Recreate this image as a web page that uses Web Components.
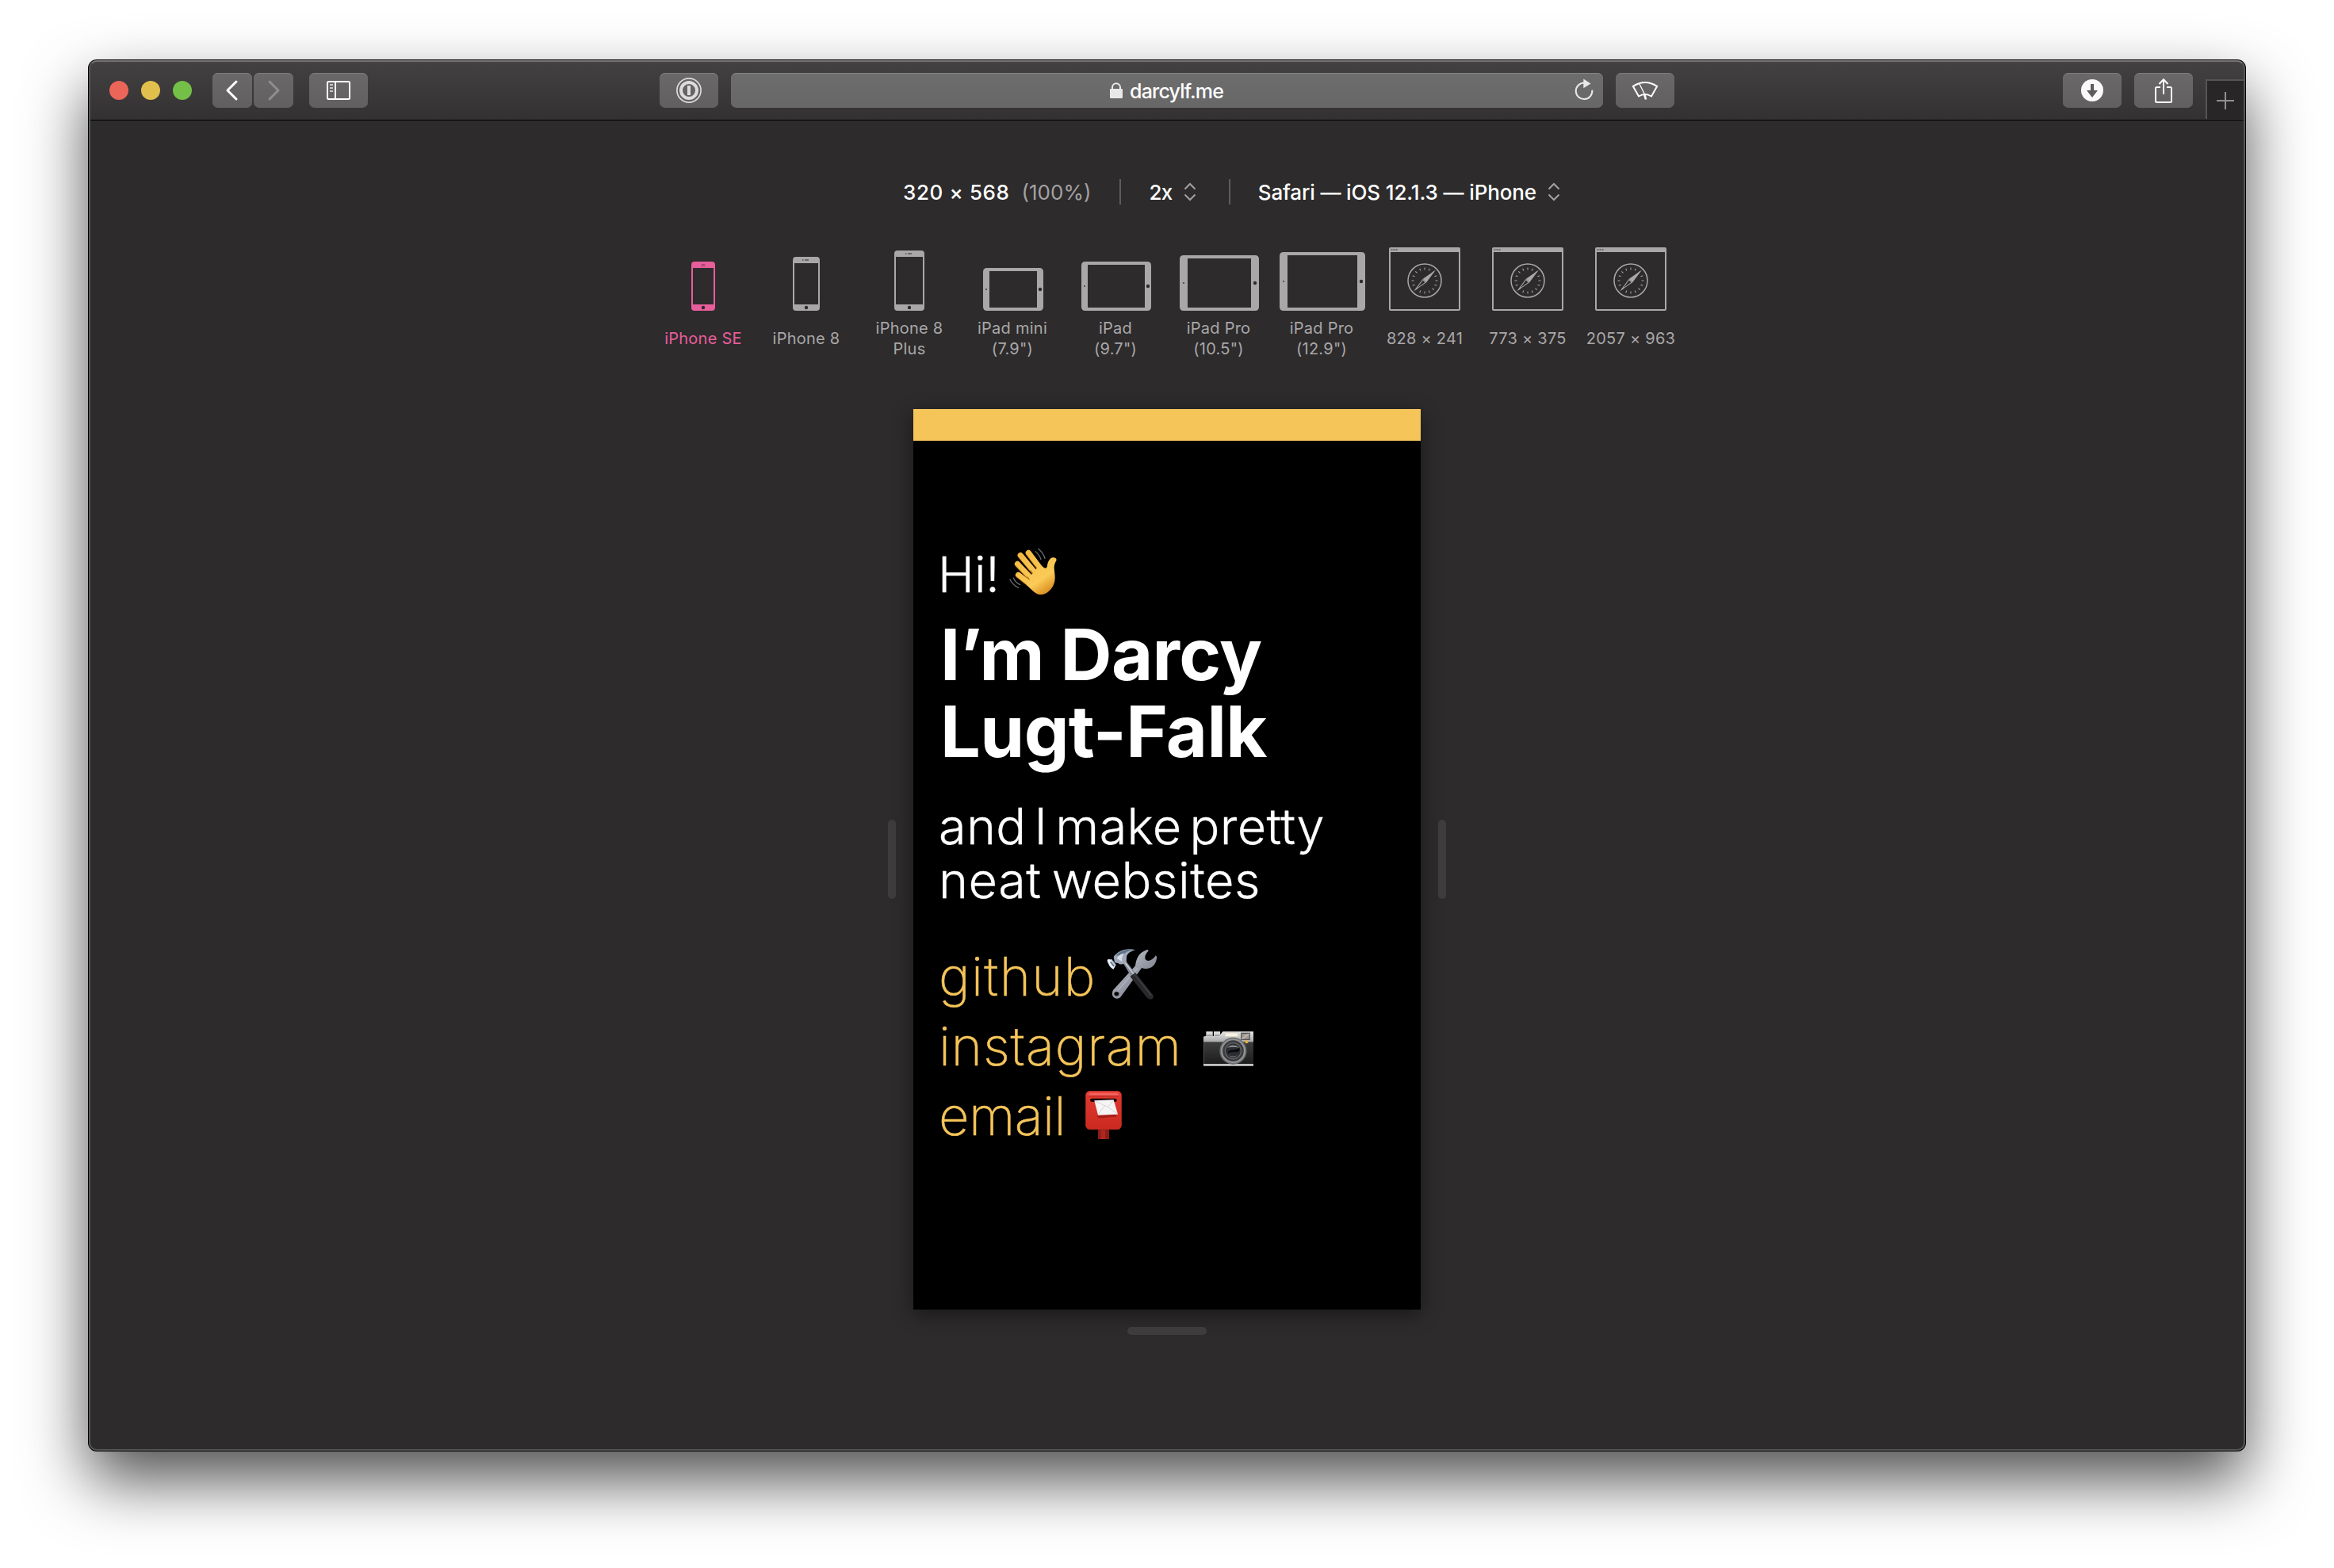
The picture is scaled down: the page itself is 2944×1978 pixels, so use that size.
<!DOCTYPE html>
<html lang="en">
<head>
<meta charset="utf-8">
<title>darcylf.me</title>
<style>
  html, body { margin: 0; background: #fff; }
  body { width: 2944px; height: 1978px; overflow: hidden; box-sizing: border-box; padding: 76px 112px 0; font-family: Inter, "Liberation Sans", sans-serif; color: #fff; }
</style>
</head>
<body>
<browser-window>
  <browser-toolbar slot="toolbar"></browser-toolbar>
  <size-bar></size-bar>
  <device-list></device-list>
  <resizable-viewport><personal-site></personal-site></resizable-viewport>
</browser-window>

<script>
const define = (name, html, setup) => customElements.define(name, class extends HTMLElement {
  connectedCallback() {
    if (this.shadowRoot) return;
    const root = this.attachShadow({ mode: 'open' });
    root.innerHTML = html;
    if (setup) setup(this, root);
  }
});

/* ---------- window frame ---------- */
define('browser-window', `
<style>
  :host { display: flex; flex-direction: column; position: relative; width: 2720px; height: 1754px; border-radius: 10px; background: #2d2b2c;
    box-shadow: 0 0 0 1px #000, 0 37px 80px rgba(0,0,0,.69); }
  .clip { display: flex; flex-direction: column; height: 100%; border-radius: 10px; overflow: hidden; }
  .edge { position: absolute; inset: 0; border-radius: 10px; border: 2px solid #565555; border-top-color: #777576; pointer-events: none; }
  main { display: flex; flex-direction: column; align-items: center; padding-top: 74px; }
</style>
<div class="clip"><slot name="toolbar"></slot><main><slot></slot></main></div><div class="edge"></div>`);

/* ---------- toolbar ---------- */
define('tool-button', `
<style>
  :host { display: flex; align-items: center; justify-content: center; box-sizing: border-box; width: var(--w, 74px); height: 44px; border-radius: 7px;
    background: linear-gradient(#6a6869, #615f60); box-shadow: inset 0 1px 0 #7e7c7d; }
</style><slot></slot>`);

define('address-field', `
<style>
  :host { display: flex; box-sizing: border-box; width: 1100px; height: 44px; border-radius: 7px; align-items: center; padding: 0 11px 0 478px;
    background: linear-gradient(#6e6d6e, #676767); box-shadow: inset 0 1px 0 #858485; }
  .url { margin: 2px 0 0 9px; font-size: 25px; font-weight: 500; letter-spacing: -.8px; line-height: 44px; flex: 1; }
  svg { display: block; }
</style>
<svg width="16" height="20" viewBox="0 0 16 20"><path d="M3 10V6.2a5 5 0 0 1 10 0V10" fill="none" stroke="#e8e8e8" stroke-width="2"/><rect y="8" width="16" height="12" rx="1" fill="#e8e8e8"/></svg>
<span class="url">darcylf.me</span>
<svg width="26" height="30" viewBox="0 0 26 30"><path d="M13 5.500A10.300 10.300 0 1 0 23.300 14.600" fill="none" stroke="#e8e8e8" stroke-width="2"/><path d="M12.300 0.500L21.500 6.600L12.300 12.300Z" fill="#e8e8e8"/></svg>`);

define('browser-toolbar', `
<style>
  :host { display: grid; grid-template-columns: 1fr auto 1fr; box-sizing: border-box; height: 76px; padding: 16px 0 0 26px; background: linear-gradient(#434142, #333132); border-bottom: 1px solid #000; flex: none; }
  .group { display: flex; align-items: flex-start; }
  .mid { gap: 16px; margin-left: -26px; }
  .right { justify-content: flex-end; gap: 16px; }
  .lights { display: flex; gap: 16px; margin: 10px 26px 0 0; }
  .lights i { width: 24px; height: 24px; border-radius: 50%; }
  .nav { display: flex; gap: 2px; margin-right: 20px; }
  .nav tool-button { --w: 50px; }
  .tab { box-sizing: border-box; width: 50px; height: 50px; margin-top: 8px; padding: 2px 2px 0 0; border: 2px solid #565555; border-width: 2px 0 0 2px; background: #282627; display: flex; align-items: center; justify-content: center; }
  svg { display: block; }
</style>
<div class="group">
  <div class="lights"><i style="background:#ec6559"></i><i style="background:#e1bf4c"></i><i style="background:#73bf48"></i></div>
  <div class="nav">
    <tool-button><svg width="20" height="28" viewBox="0 0 20 28"><path d="M15 3L4 14L15 25" fill="none" stroke="#fff" stroke-width="3" stroke-linecap="round" stroke-linejoin="round"/></svg></tool-button>
    <tool-button><svg width="20" height="28" viewBox="0 0 20 28"><path d="M5 3L16 14L5 25" fill="none" stroke="#8f8d8e" stroke-width="3" stroke-linecap="round" stroke-linejoin="round"/></svg></tool-button>
  </div>
  <tool-button><svg width="30" height="24" viewBox="0 0 30 24"><rect x="1" y="1" width="28" height="22" rx="1.500" fill="none" stroke="#fff" stroke-width="2"/><path d="M11 1V23" stroke="#fff" stroke-width="2"/><path d="M4 5H8M4 9H8M4 13H8" stroke="#c9c8c8" stroke-width="2"/></svg></tool-button>
</div>
<div class="group mid">
  <tool-button><svg width="32" height="32" viewBox="0 0 32 32"><g fill="none" stroke="#dddcdc"><circle cx="16" cy="16" r="15.100" stroke-width="1.700"/><circle cx="16" cy="16" r="10" stroke-width="4"/></g><rect x="14" y="10" width="4" height="12" fill="#dddcdc"/></svg></tool-button>
  <address-field></address-field>
  <tool-button><svg width="34" height="28" viewBox="0 0 34 28"><g fill="none" stroke="#fff" stroke-width="2" stroke-linejoin="round"><path d="M1.800 8.800Q17 -1 32.200 8.800L25 21.500Q17 16.500 9 21.500Z"/><path d="M9.500 5L17.300 20.500" stroke-width="1.300"/><path d="M16.200 19L18 25.500" stroke-width="2.600"/></g></svg></tool-button>
</div>
<div class="group right">
  <tool-button><svg width="28" height="28" viewBox="0 0 28 28"><circle cx="14" cy="14" r="14" fill="#fbf9fa"/><path d="M12 6H16V14H21L14 23L7 14H12Z" fill="#5d5b5c"/></svg></tool-button>
  <tool-button><svg width="24" height="32" viewBox="0 0 24 32"><g fill="none" stroke="#fff" stroke-width="2"><path d="M8 12H3.500Q2 12 2 13.500V29.500Q2 31 3.500 31H20.500Q22 31 22 29.500V13.500Q22 12 20.500 12H16"/><path d="M12 21V2.500M6.500 8L12 2.300L17.500 8"/></g></svg></tool-button>
  <div class="tab"><svg width="22" height="22" viewBox="0 0 22 22"><path d="M11 0V22M0 11H22" stroke="#929091" stroke-width="2"/></svg></div>
</div>`);

/* ---------- dimensions / pixel ratio / user agent ---------- */
define('updown-arrows', `
<style>:host { display: block; } svg { display: block; }</style><svg width="16" height="24" viewBox="0 0 16 24"><path d="M1.500 8.500L8 2L14.500 8.500M1.500 15.500L8 22L14.500 15.500" fill="none" stroke="#a3a1a2" stroke-width="2"/></svg>`);

define('size-bar', `
<style>
  :host { display: flex; align-items: center; align-self: flex-start; height: 32px; padding-left: 1027px; font-size: 26px; font-weight: 500; line-height: 32px; white-space: nowrap; }
  span { padding-top: 2px; }
  .dim { letter-spacing: .6px; }
  .zoom { color: #a3a1a2; font-weight: 400; margin-left: 15px; }
  hr { width: 2px; height: 32px; border: 0; background: #5e5c5d; margin: 0; }
  .ua { letter-spacing: -.13px; margin-right: 14px; }
  .ratio { letter-spacing: -.6px; margin-right: 14px; }
</style>
<span class="dim">320 × 568</span><span class="zoom">(100%)</span>
<hr style="margin:0 35px 0 36px"><span class="ratio">2x</span><updown-arrows></updown-arrows>
<hr style="margin:0 35px 0 41px"><span class="ua">Safari — iOS 12.1.3 — iPhone</span><updown-arrows></updown-arrows>`);

/* ---------- device presets ---------- */
const phone = (w, h, c, speaker) => `<svg width="${w}" height="${h}" viewBox="0 0 ${w} ${h}"><path fill="${c}" fill-rule="evenodd" d="M4 0H${w-4}Q${w} 0 ${w} 4V${h-4}Q${w} ${h} ${w-4} ${h}H4Q0 ${h} 0 ${h-4}V4Q0 0 4 0ZM2 8V${h-8}H${w-2}V8Z"/><circle cx="${w/2}" cy="${h-4}" r="2.200" fill="#2d2b2c"/>${speaker}</svg>`;
const dash = w => `<path d="M${w/2-5} 4h1.500M${w/2-2} 4h5" stroke="#6b696a" stroke-width="2"/>`;
const tablet = (w, h, c, b) => `<svg style="margin-left:2px" width="${w}" height="${h}" viewBox="0 0 ${w} ${h}"><path fill="${c}" fill-rule="evenodd" d="M5 0H${w-5}Q${w} 0 ${w} 5V${h-5}Q${w} ${h} ${w-5} ${h}H5Q0 ${h} 0 ${h-5}V5Q0 0 5 0ZM${b} 4V${h-4}H${w-b}V4Z"/><circle cx="${w-b/2}" cy="${h/2}" r="2.200" fill="#2d2b2c"/><rect x="${b/2-1}" y="${h/2-1}" width="2" height="2" fill="#565455"/></svg>`;
const compass = c => {
  let ticks = '';
  for (let i = 0; i < 16; i++) ticks += `<path d="M45 25.500v3" transform="rotate(${i * 22.5} 45 42)"/>`;
  return `<svg width="90" height="80" viewBox="0 0 90 80"><path fill="${c}" fill-rule="evenodd" d="M2 0H88Q90 0 90 2V78Q90 80 88 80H2Q0 80 0 78V2Q0 0 2 0ZM2 6V78H88V6Z"/><path d="M2.500 3h2M5.500 3h2M8.500 3h2" stroke="#6b696a" stroke-width="2"/><circle cx="45" cy="42" r="21" fill="none" stroke="${c}" stroke-width="1.500"/><g stroke="${c}" stroke-width="1">${ticks}</g><path d="M59 28.500L47.200 44.200L42.800 39.800Z" fill="${c}"/><path d="M31 55.500L42.800 39.800L47.200 44.200ZM35.500 51.200L45.400 44.200L42.800 41.600Z" fill="${c}" fill-rule="evenodd"/></svg>`;
};
const G = '#a9a7a8', P = '#e85d9b';
const devices = [
  [phone(30, 62, P, '<path d="M13 3.500h4M12 5.500h6" stroke="#93406a" stroke-width="1.200"/>'), 'iPhone SE', P],
  [phone(34, 68, G, dash(34)), 'iPhone 8'],
  [phone(38, 76, G, dash(38)), 'iPhone 8<br>Plus'],
  [tablet(76, 54, G, 8), 'iPad mini<br>(7.9")'],
  [tablet(88, 62, G, 8), 'iPad<br>(9.7")'],
  [tablet(100, 70, G, 10), 'iPad Pro<br>(10.5")'],
  [tablet(108, 74, G, 10), 'iPad Pro<br>(12.9")'],
  [compass(G), '828 × 241'], [compass(G), '773 × 375'], [compass(G), '2057 × 963']
];

define('device-preset', `
<style>
  :host { display: flex; flex-direction: column; align-items: center; width: 130px; }
  .icon { display: flex; align-items: flex-end; height: 80px; }
  .label { display: flex; align-items: center; height: 52px; margin-top: 9px; font-size: 20px; line-height: 26px; letter-spacing: .25px; text-align: center; white-space: nowrap; }
</style>
<div class="icon"><slot name="icon"></slot></div><div class="label"><slot></slot></div>`);

define('device-list', `
<style>
  :host { display: flex; margin-top: 54px; color: #a9a7a8; }
  svg { display: block; }
</style>
${devices.map(([icon, label, color]) => `<device-preset style="${color ? 'color:' + color : ''}"><span slot="icon">${icon}</span><span>${label}</span></device-preset>`).join('')}`);

/* ---------- responsive viewport with drag handles ---------- */
define('resizable-viewport', `
<style>
  :host { display: flex; flex-direction: column; align-items: center; margin-top: 63px; }
  .row { display: flex; align-items: center; gap: 22px; }
  .page { width: 640px; height: 1136px; background: #000; box-shadow: 0 6px 24px rgba(0,0,0,.45); }
  .grip { width: 10px; height: 100px; border-radius: 5px; background: #3e3c3d; }
  .grip.bottom { width: 100px; height: 10px; margin-top: 22px; }
</style>
<div class="row"><div class="grip"></div><div class="page"><slot></slot></div><div class="grip"></div></div>
<div class="grip bottom"></div>`);

/* ---------- emoji ---------- */
const emoji = {
  wave: [60, 59.5, '100 90 178 178', `
    <defs><linearGradient id="hand" x1="120" y1="110" x2="230" y2="268" gradientUnits="userSpaceOnUse"><stop offset="0" stop-color="#f3b942"/><stop offset=".72" stop-color="#fbcb57"/><stop offset="1" stop-color="#d98f22"/></linearGradient></defs>
    <g fill="none" stroke="#bd7b1d" stroke-width="22" stroke-linecap="round"><path d="M134 193L186 235"/><path d="M131 152L190 215"/><path d="M142 119L205 195"/><path d="M172 110L228 185"/></g>
    <g fill="none" stroke="url(#hand)" stroke-width="19" stroke-linecap="round"><path d="M134 192L186 233"/><path d="M131 150L190 213"/><path d="M142 118L205 193"/><path d="M172 108L228 183"/></g>
    <path d="M172 205L205 165L224 160Q238 174 242 160C244 144 251 128 264 127Q276 127 277 136C273 144 268 152 268 164C268 178 272 190 271 207C270 236 247 267 218 267C200 267 184 250 166 230Z" fill="url(#hand)"/>
    <path d="M196 158L202 166M180 176L187 186M168 200L175 210" stroke="#a9660f" stroke-width="3" stroke-linecap="round"/>
    <path d="M208 93Q227 108 234 131M197 103Q213 115 219 135M102 208Q112 230 136 242M115 203Q123 222 142 230" fill="none" stroke="#77777a" stroke-width="3.500"/>`],
  tools: [63.5, 64, '138 52 190 192', `
    <defs><linearGradient id="steel" x1="0" y1="0" x2="1" y2="1"><stop offset="0" stop-color="#d8dde6"/><stop offset=".5" stop-color="#969ba6"/><stop offset="1" stop-color="#62656e"/></linearGradient></defs>
    <path d="M162 208L246 116C249 96 254 66 292 55L296 59C284 72 280 82 284 92Q291 100 303 95C313 91 319 83 323 77L327 82C326 108 310 127 286 127Q276 127 270 124L192 232C184 244 166 242 160 230Q157 217 162 208Z" fill="url(#steel)"/>
    <path d="M176 214L254 125" stroke="#c5c9d1" stroke-width="3" opacity=".6"/>
    <ellipse cx="175" cy="222" rx="9" ry="8" fill="#030303" stroke="#565960" stroke-width="2"/>
    <path d="M200 106L212 100L246 144L230 156Z" fill="#868b96"/><path d="M206 103L240 148" stroke="#c9cfda" stroke-width="4"/>
    <path d="M226 156L246 142L312 226Q318 237 308 242Q298 246 289 236Z" fill="#29292c"/><path d="M242 148L306 228" stroke="#4a4a50" stroke-width="3"/>
    <path d="M164 82C180 60 210 47 246 56C226 62 215 70 213 82L212 104Q192 116 181 106L168 104Z" fill="#9fa9b8"/>
    <path d="M172 77C190 58 216 51 244 56C222 58 204 65 200 78Z" fill="#5f7488"/><path d="M176 88Q186 70 204 69Q192 84 196 100Z" fill="#d7dee9"/>
    <path d="M141 96L156 90L173 112L163 129Q145 120 141 96Z" fill="#b9c6d6"/><path d="M140 98Q139 90 148 91L156 97Q160 116 170 116L163 129Q147 117 140 98Z" fill="#e9f1f8"/><path d="M152 101L165 118" stroke="#5e7186" stroke-width="5"/>`],
  camera: [63.5, 44, '502 362 190 132', `
    <defs><linearGradient id="chrome" x1="0" y1="0" x2="0" y2="1"><stop offset="0" stop-color="#e6e6e6"/><stop offset="1" stop-color="#a5a5a7"/></linearGradient><linearGradient id="leather" x1="0" y1="0" x2="0" y2="1"><stop offset="0" stop-color="#3e3e3f"/><stop offset="1" stop-color="#1c1c1d"/></linearGradient></defs>
    <path d="M512 363H537V380H541V363H565V375L575 363H692V404H502V383Q503 380 512 380Z" fill="url(#chrome)"/>
    <path d="M515 377H534M544 377H563" stroke="#77777a" stroke-width="3"/>
    <rect x="502" y="402" width="190" height="84" fill="url(#leather)"/><path d="M502 404V486M692 404V486" stroke="#77777a" stroke-width="3"/>
    <rect x="502" y="485" width="190" height="9" fill="#a6a6a7"/><rect x="502" y="486" width="190" height="3" fill="#dadada"/>
    <rect x="583" y="368" width="49" height="14" rx="3" fill="#f7f3e3" stroke="#c7c2b0" stroke-width="1.500"/>
    <rect x="643" y="367" width="35" height="28" fill="#555"/><rect x="647" y="371" width="27" height="20" fill="#a39a94"/><path d="M647 391L674 371" stroke="#c9c1bb" stroke-width="4"/>
    <circle cx="665" cy="402" r="6" fill="#e7b22f"/>
    <circle cx="614" cy="436" r="51" fill="#6b6b6d"/><circle cx="614" cy="436" r="46" fill="#939496"/><circle cx="614" cy="436" r="40" fill="#3b3c3e"/><circle cx="614" cy="436" r="32" fill="#626467"/><circle cx="614" cy="436" r="28" fill="#2b2d30"/>
    <path d="M591 424Q613 405 637 424Q613 418 591 424Z" fill="#909397"/><path d="M592 444Q600 430 618 432L638 426Q640 438 628 440Q612 440 592 444Z" fill="#0b0c0e"/><path d="M596 452Q614 462 632 451Q614 468 596 452Z" fill="#818488"/>`],
  mailbox: [46, 61.5, '54 587 138 184', `
    <defs><linearGradient id="red" x1="0" y1="0" x2="0" y2="1"><stop offset="0" stop-color="#ee4a43"/><stop offset=".15" stop-color="#de372f"/><stop offset="1" stop-color="#cb2a20"/></linearGradient></defs>
    <rect x="102" y="725" width="42" height="46" fill="#8b1c17"/><rect x="112" y="735" width="18" height="36" fill="#ad2720"/>
    <rect x="55" y="588" width="136" height="145" rx="17" fill="url(#red)" stroke="#a92820" stroke-width="2"/>
    <path d="M66 605Q67 596 76 596H170Q179 596 180 605" fill="#f2625b"/><path d="M66 607H180" stroke="#a11f19" stroke-width="2.500"/>
    <rect x="72" y="616" width="101" height="13" rx="6.500" fill="#190504"/>
    <path d="M96 682L106 690L172 684L168 676Z" fill="#8b1812" opacity=".7"/>
    <path d="M88 624L161 621L177 676L102 679Z" fill="#f5f5f6"/><path d="M89 625L139 648L161 622M102 678L127 643M139 648L176 675" fill="none" stroke="#b9b9bc" stroke-width="1.500"/>`]
};

define('emoji-glyph', '<style>:host { display: block; flex: none; } svg { display: block; }</style>', (el, root) => {
  const [w, h, box, art] = emoji[el.getAttribute('name')];
  root.innerHTML += `<svg width="${w}" height="${h}" viewBox="${box}" preserveAspectRatio="none">${art}</svg>`;
});

/* ---------- the site inside the viewport ---------- */
define('personal-site', `
<style>
  :host { display: flex; flex-direction: column; height: 100%; white-space: nowrap; }
  header { height: 40px; background: #f5c55a; }
  .body { display: flex; flex-direction: column; padding: 128.6px 0 0 31px; }
  .hi { display: flex; align-items: center; height: 80px; font-size: 62px; line-height: 80px; font-weight: 300; -webkit-text-stroke: .3px; }
  h1 { margin: 12px 0 0 3px; font-size: 90px; line-height: 97.7px; font-weight: 700; letter-spacing: -.64px; }
  p { margin: 36.4px 0 0 1px; font-size: 63px; line-height: 68px; font-weight: 300; -webkit-text-stroke: .3px; }
  p span { display: block; }
  nav { display: flex; flex-direction: column; margin-top: 43.3px; color: #f5c55a; font-size: 67px; line-height: 88px; font-weight: 200; -webkit-text-stroke: .5px; }
  a { display: flex; align-items: center; height: 88px; padding-left: 1px; }
</style>
<header></header>
<div class="body">
  <div class="hi"><span>Hi!</span><emoji-glyph name="wave" style="margin:-8px 0 0 12px"></emoji-glyph></div>
  <h1>I’m Darcy<br>Lugt-Falk</h1>
  <p><span style="letter-spacing:.3px;word-spacing:-8px">and I make pretty</span><span style="letter-spacing:.5px;word-spacing:-5px">neat websites</span></p>
  <nav>
    <a><span style="letter-spacing:1.300px">github</span><emoji-glyph name="tools" style="margin:-5px 0 0 13px"></emoji-glyph></a>
    <a><span style="letter-spacing:.8px">instagram</span><emoji-glyph name="camera" style="margin:6px 0 0 27px"></emoji-glyph></a>
    <a><span style="letter-spacing:-.6px">email</span><emoji-glyph name="mailbox" style="margin:-2px 0 0 25px"></emoji-glyph></a>
  </nav>
</div>`);
</script>
</body>
</html>
